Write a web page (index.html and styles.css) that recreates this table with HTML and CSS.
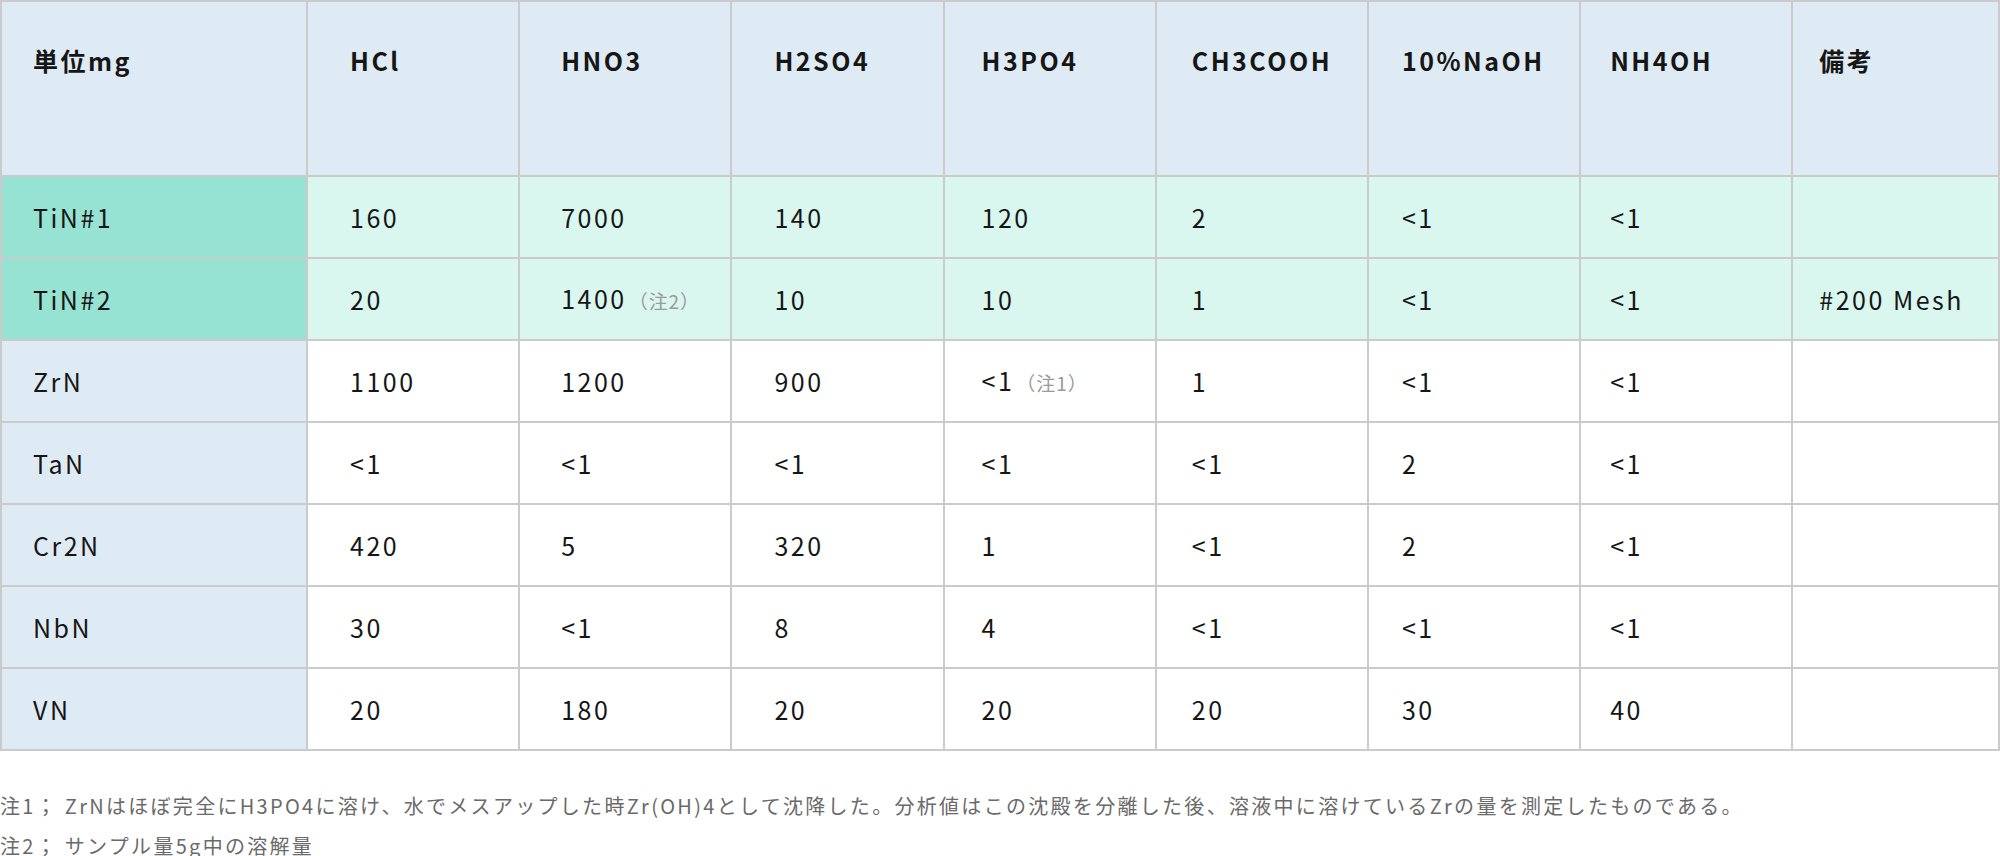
FILE: index.html
```html
<!DOCTYPE html>
<html lang="ja">
<head>
<meta charset="utf-8">
<title>溶解試験</title>
<link rel="stylesheet" href="styles.css">
</head>
<body>
<table class="data">
  <colgroup>
    <col class="col-first">
    <col class="col-mid" span="7">
    <col>
  </colgroup>
  <thead>
    <tr>
      <th>単位mg</th>
      <th>HCl</th>
      <th>HNO3</th>
      <th>H2SO4</th>
      <th>H3PO4</th>
      <th>CH3COOH</th>
      <th>10%NaOH</th>
      <th>NH4OH</th>
      <th>備考</th>
    </tr>
  </thead>
  <tbody>
    <tr class="hl">
      <td>TiN#1</td><td>160</td><td>7000</td><td>140</td><td>120</td><td>2</td><td>&lt;1</td><td>&lt;1</td><td></td>
    </tr>
    <tr class="hl">
      <td>TiN#2</td><td>20</td><td>1400<span class="ref">（注2）</span></td><td>10</td><td>10</td><td>1</td><td>&lt;1</td><td>&lt;1</td><td>#200 Mesh</td>
    </tr>
    <tr>
      <td>ZrN</td><td>1100</td><td>1200</td><td>900</td><td>&lt;1<span class="ref">（注1）</span></td><td>1</td><td>&lt;1</td><td>&lt;1</td><td></td>
    </tr>
    <tr>
      <td>TaN</td><td>&lt;1</td><td>&lt;1</td><td>&lt;1</td><td>&lt;1</td><td>&lt;1</td><td>2</td><td>&lt;1</td><td></td>
    </tr>
    <tr>
      <td>Cr2N</td><td>420</td><td>5</td><td>320</td><td>1</td><td>&lt;1</td><td>2</td><td>&lt;1</td><td></td>
    </tr>
    <tr>
      <td>NbN</td><td>30</td><td>&lt;1</td><td>8</td><td>4</td><td>&lt;1</td><td>&lt;1</td><td>&lt;1</td><td></td>
    </tr>
    <tr>
      <td>VN</td><td>20</td><td>180</td><td>20</td><td>20</td><td>20</td><td>30</td><td>40</td><td></td>
    </tr>
  </tbody>
</table>
<div class="notes">
  <p>注1； ZrNはほぼ完全にH3PO4に溶け、水でメスアップした時Zr(OH)4として沈降した。分析値はこの沈殿を分離した後、溶液中に溶けているZrの量を測定したものである。</p>
  <p>注2； サンプル量5g中の溶解量</p>
</div>
</body>
</html>
```

FILE: styles.css
```css
html, body {
  margin: 0;
  padding: 0;
  background: #ffffff;
}

body {
  font-family: "Noto Sans CJK JP", "Noto Sans", sans-serif;
  color: #161616;
}

.data {
  width: 2000px;
  table-layout: fixed;
  border-collapse: collapse;
  border: 2px solid #cbcbcb;
}

.col-first {
  width: 306px;
}

.col-mid {
  width: 212.2px;
}

.data th,
.data td {
  border: 2px solid #cbcbcb;
  font-size: 25px;
  letter-spacing: 0.1em;
  line-height: 36px;
  text-align: left;
  padding: 0 0 0 37px;
  white-space: nowrap;
}

.data th {
  background: #dfebf4;
  font-weight: 700;
  vertical-align: top;
  height: 133px;
  padding-top: 40px;
}

.data td {
  font-weight: 400;
  vertical-align: middle;
  height: 80px;
  background: #ffffff;
}

.data th:nth-child(1),
.data td:nth-child(1) { padding-left: 31px; }
.data th:nth-child(2),
.data td:nth-child(2) { padding-left: 42px; }
.data th:nth-child(3),
.data td:nth-child(3) { padding-left: 41px; }
.data th:nth-child(4),
.data td:nth-child(4) { padding-left: 42px; }
.data th:nth-child(5),
.data td:nth-child(5) { padding-left: 37px; }
.data th:nth-child(6),
.data td:nth-child(6) { padding-left: 35px; }
.data th:nth-child(7),
.data td:nth-child(7) { padding-left: 33px; }
.data th:nth-child(8),
.data td:nth-child(8) { padding-left: 29px; }
.data th:nth-child(9),
.data td:nth-child(9) { padding-left: 26px; }

.data td:first-child {
  background: #dfebf4;
}

.data tr.hl td {
  background: #d9f6ef;
}

.data tr.hl td:first-child {
  background: #97e3d3;
}

.ref {
  font-size: 19px;
  color: #9a9a9a;
  letter-spacing: 0.05em;
  margin-left: 2px;
}

.notes {
  margin-top: 35px;
  color: #6a6a6a;
  font-size: 20px;
  letter-spacing: 2.3px;
  line-height: 40px;
}

.notes p {
  margin: 0;
}
```
